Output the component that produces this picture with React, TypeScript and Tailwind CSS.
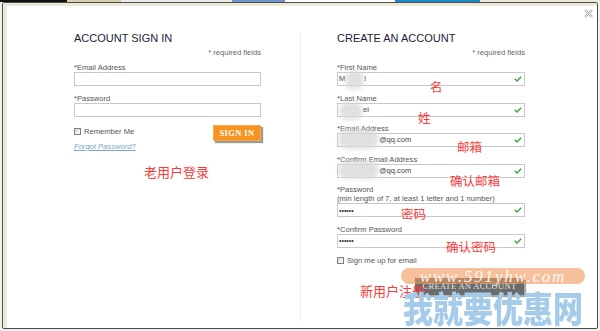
import type { ReactNode } from 'react'

const sans = "font-['Liberation_Sans',Arial,sans-serif]"
const cjk = "font-['Noto_Sans_CJK_SC','Noto_Sans',sans-serif]"

function Check() {
  return (
    <svg width="8" height="6" viewBox="0 0 8 6" className="ml-auto shrink-0">
      <path d="M0.8 2.8 L3 5 L7.2 0.8" fill="none" stroke="#3aa53a" strokeWidth="1.4" />
    </svg>
  )
}

function Box() {
  return <span className="block w-[7px] h-[7px] border border-[#7f7f7f] bg-gradient-to-br from-[#d4d4d4] to-white shrink-0" />
}

// one label + input pair
function Field({ label, className, children, ok }: { label: ReactNode; className?: string; children?: ReactNode; ok?: boolean }) {
  return (
    <div className={className}>
      <div className="text-[7.6px] leading-[9px] text-[#555] whitespace-nowrap">{label}</div>
      <div className="relative h-[14px] border border-[#c8c8c8] flex items-center pl-[1px] pr-[2px] text-[7.5px] text-[#444] bg-white">
        {children}
        {ok && <Check />}
      </div>
    </div>
  )
}

function Blob({ className }: { className: string }) {
  return <span className={`absolute rounded-full bg-[#d9d9d9] blur-[2px] opacity-80 ${className}`} />
}

function Dots() {
  return <span className="text-[7px] leading-none text-[#333]">••••••</span>
}

export default function App() {
  return (
    <div className={`relative w-[600px] h-[331px] overflow-hidden bg-[#efefef] ${sans}`}>
      {/* page behind the dialog */}
      <div className="flex h-[2px]">
        <div className="w-[67px] bg-[#111]" />
        <div className="w-[54px] bg-[#d6d0b4]" />
        <div className="w-[111px] bg-[#ececec]" />
        <div className="w-[53px] bg-[#6f95cf]" />
        <div className="w-[110px] bg-white" />
        <div className="w-[85px] bg-[#1f8ac8]" />
        <div className="flex-1 bg-[#e9e6da]" />
      </div>

      {/* dialog */}
      <div className="relative ml-[2px] w-[596px] h-[327px] border border-[#4d4d4d] rounded-[2px] bg-white">
        <div className="h-full border-l-[4px] border-t-[3px] border-[#ece9d8] flex">
          {/* sign in */}
          <div className="w-[293px] pl-[67px] pr-[39px] pt-[26px]">
            <h2 className="text-[11px] leading-[13px] text-[#1c1c3c]">ACCOUNT SIGN IN</h2>
            <div className="mt-[3px] text-right text-[7.6px] leading-[10px] text-[#666]">* required fields</div>
            <Field label="*Email Address" className="mt-[5px]" />
            <Field label="*Password" className="mt-[8px]" />
            <div className="mt-[8px] flex justify-between items-start">
              <div>
                <div className="mt-[1.5px] flex items-center gap-[3px]">
                  <Box />
                  <span className="text-[7.6px] leading-[9px] text-[#555]">Remember Me</span>
                </div>
                <div className="mt-[6px] text-[7.6px] leading-[9px] italic underline text-[#79a7c6]">Forgot Password?</div>
              </div>
              <button className="w-[48px] h-[16px] bg-[#f7931e] border border-[#fba94a] shadow-[2px_2px_1px_rgba(0,0,0,0.4)] text-white font-['Liberation_Serif',serif] font-bold text-[8.5px] tracking-[0.4px] leading-none">
                SIGN IN
              </button>
            </div>
            <div className={`mt-[14px] pl-[70px] text-[13px] leading-[13px] text-[#ff3a3a] ${cjk}`}>老用户登录</div>
          </div>

          <div className="w-px mt-[27px] h-[288px] bg-[#ececec]" />

          {/* create account */}
          <div className="w-[224px] pl-[36px] pt-[26px]">
            <h2 className="text-[11px] leading-[13px] text-[#1c1c3c] whitespace-nowrap">CREATE AN ACCOUNT</h2>
            <div className="mt-[3px] text-right text-[7.6px] leading-[10px] text-[#666]">* required fields</div>
            <Field label="*First Name" className="mt-[5px]" ok>
              <span>M</span>
              <span className="inline-block w-[19px]" />
              <span>l</span>
              <Blob className="left-[7px] -top-[3px] w-[19px] h-[20px]" />
            </Field>
            <Field label="*Last Name" className="mt-[7.5px]" ok>
              <span className="inline-block w-[24px]" />
              <span>ei</span>
              <Blob className="left-[1px] -top-[2px] w-[24px] h-[18px]" />
            </Field>
            <Field label="*Email Address" className="mt-[7.5px]" ok>
              <span className="inline-block w-[40px]" />
              <span>@qq.com</span>
              <Blob className="left-0 -top-[5px] w-[41px] h-[20px]" />
            </Field>
            <Field label="*Confirm Email Address" className="mt-[7.5px]" ok>
              <span className="inline-block w-[40px]" />
              <span>@qq.com</span>
              <Blob className="left-0 -top-[4px] w-[41px] h-[18px]" />
            </Field>
            <Field
              className="mt-[7.5px]"
              ok
              label={
                <>
                  *Password
                  <br />
                  (min length of 7, at least 1 letter and 1 number)
                </>
              }
            >
              <Dots />
            </Field>
            <Field label="*Confirm Password" className="mt-[7.5px]" ok>
              <Dots />
            </Field>
            <div className="mt-[9px] flex items-center gap-[3px] h-[8px]">
              <Box />
              <span className="text-[7.6px] leading-[9px] text-[#555]">Sign me up for email</span>
            </div>
            <div className="mt-[13px] flex justify-end pr-[1px]">
              <button className="w-[109px] h-[17px] bg-[#6c6c6c] shadow-[2px_2px_1px_rgba(0,0,0,0.35)] text-[#e2e2e2] font-['Liberation_Serif',serif] text-[8.5px] tracking-[0.3px] leading-none">
                CREATE AN ACCOUNT
              </button>
            </div>
          </div>
        </div>

        {/* close */}
        <svg className="absolute right-[4px] top-[6px]" width="9" height="9" viewBox="0 0 9 9">
          <path d="M1 1 L8 8 M8 1 L1 8" stroke="#a8a8a8" strokeWidth="2.4" />
          <path d="M1 1 L8 8 M8 1 L1 8" stroke="#fff" strokeWidth="0.9" />
        </svg>
      </div>

      {/* red notes drawn on the screenshot */}
      <div className={`text-[12.5px] leading-[12.5px] text-[#ff3a3a] ${cjk}`}>
        <span className="absolute left-[430px] top-[81px]">名</span>
        <span className="absolute left-[418px] top-[112px]">姓</span>
        <span className="absolute left-[457px] top-[141px]">邮箱</span>
        <span className="absolute left-[450px] top-[175px]">确认邮箱</span>
        <span className="absolute left-[401px] top-[208px]">密码</span>
        <span className="absolute left-[446px] top-[241px]">确认密码</span>
        <span className="absolute left-[360px] top-[285px] text-[13px]">新用户注册</span>
      </div>

      {/* site watermark */}
      <div className="absolute left-[401px] top-[268px] w-[184px] h-[16px] rounded-full bg-[rgba(240,150,90,0.6)] flex items-center justify-center">
        <span className="font-['Liberation_Serif',serif] italic text-[17px] leading-none tracking-[1.8px] text-white/90">www.591yhw.com</span>
      </div>
      <div
        className={`absolute left-[403px] top-[289px] text-[30px] leading-[30px] font-black text-[#a5cbea] whitespace-nowrap scale-y-[1.2] origin-top ${cjk}`}
      >
        我就要优惠网
      </div>
    </div>
  )
}
